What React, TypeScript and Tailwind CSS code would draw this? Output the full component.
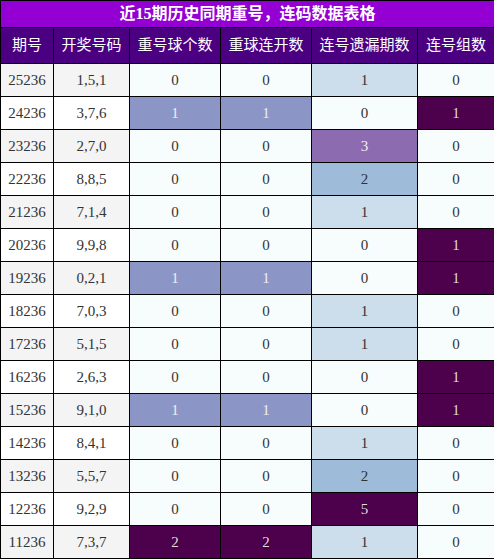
import React from 'react'

const rows: [string, string, number, number, number, number][] = [
    ['25236', '1,5,1', 0, 0, 1, 0],
    ['24236', '3,7,6', 1, 1, 0, 1],
    ['23236', '2,7,0', 0, 0, 3, 0],
    ['22236', '8,8,5', 0, 0, 2, 0],
    ['21236', '7,1,4', 0, 0, 1, 0],
    ['20236', '9,9,8', 0, 0, 0, 1],
    ['19236', '0,2,1', 1, 1, 0, 1],
    ['18236', '7,0,3', 0, 0, 1, 0],
    ['17236', '5,1,5', 0, 0, 1, 0],
    ['16236', '2,6,3', 0, 0, 0, 1],
    ['15236', '9,1,0', 1, 1, 0, 1],
    ['14236', '8,4,1', 0, 0, 1, 0],
    ['13236', '5,5,7', 0, 0, 2, 0],
    ['12236', '9,2,9', 0, 0, 5, 0],
    ['11236', '7,3,7', 2, 2, 1, 0],
]

// colour per column kind
const repeatCls = (v: number) =>
    v === 0 ? 'bg-[#f7fcfd] text-[#333]' : v === 1 ? 'bg-[#8c96c6] text-[#eeeeee]' : 'bg-[#4d004b] text-[#dddddd]'

const missCls = (v: number) => {
    if (v === 0) return 'bg-[#f7fcfd] text-[#333]'
    if (v === 1) return 'bg-[#ccdeeb] text-[#333]'
    if (v === 2) return 'bg-[#9ebcda] text-[#333]'
    if (v === 3) return 'bg-[#8c6bb1] text-[#eeeeee]'
    return 'bg-[#4d004b] text-[#dddddd]'
}

const groupCls = (v: number) => (v === 0 ? 'bg-[#f7fcfd] text-[#333]' : 'bg-[#4d004b] text-[#dddddd]')

const td = 'border border-black text-center p-0'

export default function App() {
    return (
        <div className="w-[494px] h-[559px] bg-white" style={{ fontFamily: '"Liberation Serif", "Noto Sans CJK SC", serif' }}>
            <table className="w-[494px] border-collapse table-fixed text-[15px]">
                <colgroup>
                    <col className="w-[53px]" />
                    <col className="w-[76px]" />
                    <col className="w-[91px]" />
                    <col className="w-[91px]" />
                    <col className="w-[106px]" />
                    <col className="w-[77px]" />
                </colgroup>
                <thead>
                    <tr className="h-[27px]">
                        <th colSpan={6} className="border border-black bg-[#9400d3] text-white font-bold text-[16px] p-0">
                            近15期历史同期重号，连码数据表格
                        </th>
                    </tr>
                    <tr className="h-[36px] bg-[#4b0082] text-white">
                        {['期号', '开奖号码', '重号球个数', '重球连开数', '连号遗漏期数', '连号组数'].map(h => (
                            <th key={h} className="border border-black font-normal p-0">{h}</th>
                        ))}
                    </tr>
                </thead>
                <tbody>
                    {rows.map((r, i) => (
                        <tr key={r[0]} className="h-[33px]">
                            <td className={`${td} text-[#333] ${i % 2 === 0 ? 'bg-[#f4f4f4]' : 'bg-white'}`}>{r[0]}</td>
                            <td className={`${td} text-[#333] ${i % 2 === 0 ? 'bg-[#f4f4f4]' : 'bg-white'}`}>{r[1]}</td>
                            <td className={`${td} ${repeatCls(r[2])}`}>{r[2]}</td>
                            <td className={`${td} ${repeatCls(r[3])}`}>{r[3]}</td>
                            <td className={`${td} ${missCls(r[4])}`}>{r[4]}</td>
                            <td className={`${td} ${groupCls(r[5])}`}>{r[5]}</td>
                        </tr>
                    ))}
                </tbody>
            </table>
        </div>
    )
}
